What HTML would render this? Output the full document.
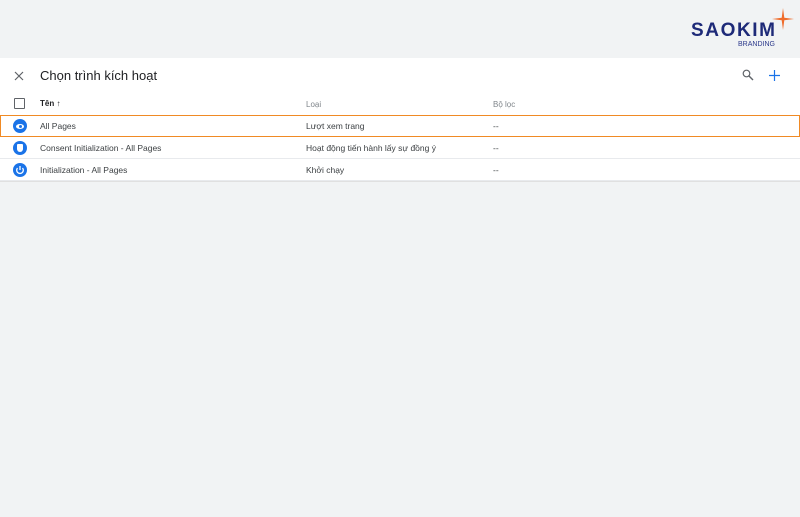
<!DOCTYPE html>
<html><head><meta charset="utf-8"><style>
*{margin:0;padding:0;box-sizing:border-box}
body{width:800px;height:517px;background:#f1f3f4;font-family:"Liberation Sans",sans-serif;position:relative;overflow:hidden;color:#3c4043}
.panel{position:absolute;left:0;top:58px;width:800px;height:124px;background:#fff;border-bottom:1px solid #e0e0e0}
.t{position:absolute;white-space:nowrap}
.row{position:absolute;left:0;width:800px;height:22px;border-bottom:1px solid #e8eaed}
.ic{position:absolute;left:13px;top:4px;width:14px;height:14px;border-radius:50%;background:#1a73e8}
.logo{position:absolute;left:691px;top:20px;font-weight:bold;font-size:19px;color:#1e2a78;letter-spacing:1.6px}
</style></head><body>
<div class="logo">SAOKIM</div>
<div class="t" style="left:738px;top:41px;font-size:7px;color:#2d3a8c">BRANDING</div>
<svg style="position:absolute;left:772px;top:8px" width="22" height="22" viewBox="0 0 22 22"><path d="M11 0 L12.3 9.7 L22 11 L12.3 12.3 L11 22 L9.7 12.3 L0 11 L9.7 9.7Z" fill="#ef6c2b"/></svg>
<div class="panel">
<svg style="position:absolute;left:14px;top:13px" width="10" height="10"><path d="M1 1L9 9M9 1L1 9" stroke="#5f6368" stroke-width="1.2"/></svg>
<div class="t" style="left:40px;top:10px;font-size:13px;color:#202124">Chọn trình kích hoạt</div>
<svg style="position:absolute;left:742px;top:11px" width="12" height="12"><circle cx="4.5" cy="4.5" r="3.3" fill="none" stroke="#5f6368" stroke-width="1.2"/><path d="M7 7L11 11" stroke="#5f6368" stroke-width="1.4"/></svg>
<svg style="position:absolute;left:769px;top:12px" width="11" height="11"><path d="M5.5 0V11M0 5.5H11" stroke="#1a73e8" stroke-width="1.2"/></svg>
<div style="position:absolute;left:14px;top:40px;width:11px;height:11px;border:1.5px solid #5f6368;border-radius:1px"></div>
<div class="t" style="left:40px;top:41px;font-size:8px;font-weight:bold;color:#202124">Tên ↑</div>
<div class="t" style="left:306px;top:42px;font-size:8px;color:#80868b">Loại</div>
<div class="t" style="left:493px;top:42px;font-size:8px;color:#80868b">Bộ lọc</div>
</div>
<div class="row" style="top:115px;background:#fff;box-shadow:inset 0 0 0 1px #f08a24;border-bottom:none"><div class="ic"><div style="position:absolute;left:3px;top:4.5px;width:8px;height:5px;border-radius:50%;background:#fff"></div><div style="position:absolute;left:5.5px;top:5.5px;width:3px;height:3px;border-radius:50%;background:#1a73e8"></div></div>
<div class="t" style="left:40px;top:6px;font-size:8.5px">All Pages</div><div class="t" style="left:306px;top:6px;font-size:8.5px">Lượt xem trang</div><div class="t" style="left:493px;top:6px;font-size:8.5px">--</div></div>
<div class="row" style="top:137px;background:#fff"><div class="ic"><div style="position:absolute;left:4px;top:3px;width:6px;height:8px;border-radius:1px 1px 3px 3px;background:#fff"></div></div>
<div class="t" style="left:40px;top:6px;font-size:8.5px">Consent Initialization - All Pages</div><div class="t" style="left:306px;top:6px;font-size:8.5px">Hoạt động tiến hành lấy sự đồng ý</div><div class="t" style="left:493px;top:6px;font-size:8.5px">--</div></div>
<div class="row" style="top:159px;background:#fff"><div class="ic"><svg width="14" height="14" style="position:absolute;left:0;top:0"><path d="M4.5 5A3.3 3.3 0 1 0 9.5 5" fill="none" stroke="#fff" stroke-width="1.3"/><path d="M7 3V7" stroke="#fff" stroke-width="1.3"/></svg></div>
<div class="t" style="left:40px;top:6px;font-size:8.5px">Initialization - All Pages</div><div class="t" style="left:306px;top:6px;font-size:8.5px">Khởi chạy</div><div class="t" style="left:493px;top:6px;font-size:8.5px">--</div></div>
</body></html>
